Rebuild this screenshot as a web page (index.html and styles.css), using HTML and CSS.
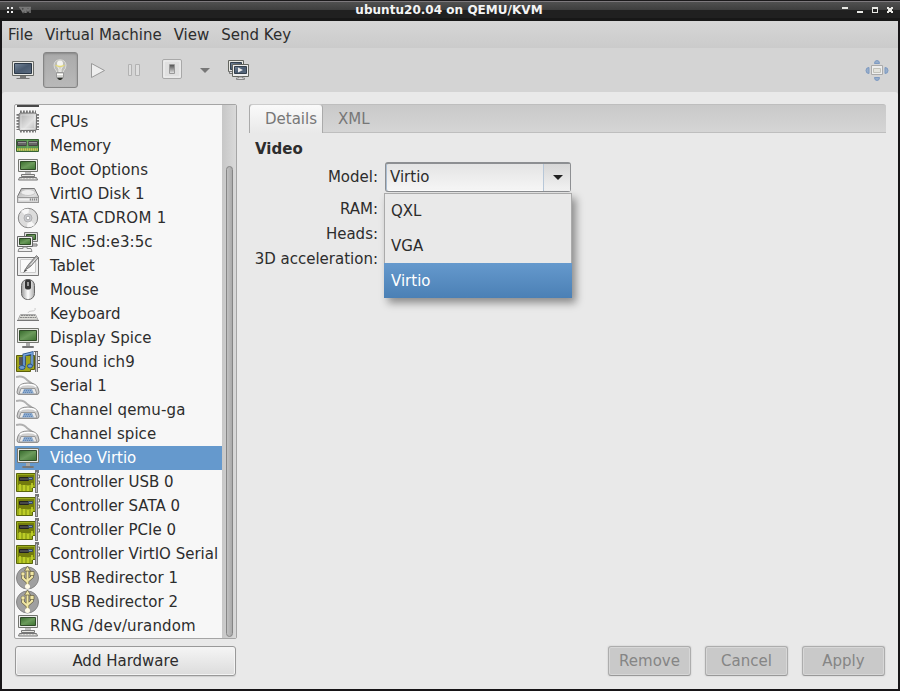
FILE: index.html
```html
<!DOCTYPE html>
<html lang="en">
<head>
<meta charset="utf-8">
<title>ubuntu20.04 on QEMU/KVM</title>
<link rel="stylesheet" href="styles.css">
</head>
<body>
<div class="window">
  <header class="titlebar">
    <svg class="title-left" width="32" height="20" viewBox="0 0 32 20"><path fill="#eee" d="M5 7h2v2H5zM9 7h2v2H9zM5 11h2v2H5zM9 11h2v2H9z"/><path fill="none" stroke="#777" stroke-width="1.500" d="M18 7l3 5 2-5v6M24 13V7l2 4 2-4v6M17 7.500h12"/></svg>
    <h1 class="title">ubuntu20.04 on QEMU/KVM</h1>
    <svg class="title-right" width="60" height="20" viewBox="0 0 60 20"><path fill="#e8e8e4" d="M4 7h6v2H4zM19 11h6v2h-6zM34 7h6v6h-6zM49 7h2v1h2V7h2v2h-1v2h1v2h-2v-1h-2v1h-2v-2h1V9h-1z"/><path fill="#222" d="M35 9h4v3h-4z"/></svg>
  </header>
  <nav class="menubar"><span>File</span><span>Virtual Machine</span><span>View</span><span>Send Key</span></nav>
  <div class="toolbar">
    <svg class="tool console" width="24" height="24"><use href="#screen"/></svg>
    <button class="tool-active"><svg width="24" height="24" viewBox="0 0 24 24"><path d="M7.500 13Q4.800 10.500 5 7Q5.500 2 11 1.800Q16.500 2 17 7Q17.200 10.500 14.500 13V15h-7z" fill="#bdbdb9" stroke="#dcdcd8" stroke-width="1"/><path d="M8 8q3-5 6 0l-2 3v3h-2v-3z" fill="#d2d2ce" stroke="#efefeb"/><circle cx="11" cy="5.500" r="3" fill="#f4f4f0"/><path d="M6.500 7q4.500 3 9 0" fill="none" stroke="#e2d878" stroke-width="1.300"/><path fill="#d8d8d4" stroke="#999" d="M7.500 14.500h7v5h-7z"/><path stroke="#fff" d="M8 16.500h6"/><path d="M8 20h6l-2 2h-2z" fill="#30332d"/></svg></button>
    <svg class="tool play" width="24" height="24" viewBox="0 0 24 24"><path d="M5.500 5.500l13 7-13 7z" fill="#eee" stroke="#999" stroke-linejoin="round"/></svg>
    <svg class="tool pause" width="24" height="24" viewBox="0 0 24 24"><path d="M6.500 6.500h3v11h-3zM13.500 6.500h4v11h-4z" fill="#dedede" stroke="#b2b2b2"/></svg>
    <svg class="tool power" width="24" height="24" viewBox="0 0 24 24"><rect x="2.500" y="2.500" width="19" height="19" rx="1.500" fill="#e0e0e0" stroke="#a8a8a8"/><rect x="4" y="4" width="16" height="16" fill="none" stroke="#f1f1f1"/><path fill="#d8d8d8" stroke="#999" d="M9.500 7.500h5v9h-5z"/><path d="M10 8h4v7h-4z" fill="url(#dark)"/></svg>
    <svg class="tool arrow" width="10" height="6" viewBox="0 0 10 6"><path fill="#777" d="M0 0h10L5 5z"/></svg>
    <svg class="tool snapshots" width="24" height="24" viewBox="0 0 24 24"><path d="M2.500 2.500h15v11h-15z" fill="#e8e8e4" stroke="#63655f"/><path fill="url(#blue)" stroke="#34404c" d="M4.500 4.500h11v7h-11z"/><path fill="#ddd" stroke="#777" d="M3.500 15.500h5v-2h-5z"/><path d="M6.500 6.500h16v12h-16z" fill="#eee" stroke="#63655f"/><path fill="url(#blue)" stroke="#34404c" d="M8.500 8.500h12v7h-12z"/><path d="M12 9.500l5 2.500-5 2.500z" fill="#eee"/><path fill="#ddd" stroke="#888" d="M12.500 19h4v1h2v1.500h-8V20h2z"/></svg>
    <svg class="fullscreen" width="24" height="24" viewBox="0 0 24 24"><g fill="#98aeca" stroke="#7d9ac2"><path d="M9.500 5.500q0-3 2.500-3t2.500 3zM9.500 19.500q0 3 2.500 3t2.500-3zM4 9.500q-3 0-3 3t3 3zM20 9.500q3 0 3 3t-3 3z"/></g><path fill="#eee" stroke="#aaa" d="M6.500 7.500h11v9h-11z"/><path fill="#e2e2dd" stroke="#c2c2ba" d="M8.500 10.500h7v4h-7z"/></svg>
  </div>
  <main class="content">
    <aside class="side">
      <div class="list-frame">
        <ul class="list">
          <li><svg><use href="#overview"/></svg></li>
          <li><svg><use href="#cpu"/></svg>CPUs</li>
          <li><svg><use href="#memory"/></svg>Memory</li>
          <li class="loose"><svg><use href="#computer"/></svg>Boot Options</li>
          <li class="loose"><svg><use href="#disk"/></svg>VirtIO Disk 1</li>
          <li class="looser"><svg><use href="#cd"/></svg>SATA CDROM 1</li>
          <li class="loose"><svg><use href="#nic"/></svg>NIC :5d:e3:5c</li>
          <li><svg><use href="#tablet"/></svg>Tablet</li>
          <li><svg><use href="#mouse"/></svg>Mouse</li>
          <li><svg><use href="#keyboard"/></svg>Keyboard</li>
          <li class="loose"><svg><use href="#display"/></svg>Display Spice</li>
          <li class="loose more"><svg><use href="#sound"/></svg>Sound ich9</li>
          <li><svg><use href="#serial"/></svg>Serial 1</li>
          <li class="loose more"><svg><use href="#serial"/></svg>Channel qemu-ga</li>
          <li class="loose"><svg><use href="#serial"/></svg>Channel spice</li>
          <li class="selected"><svg><use href="#display"/></svg>Video Virtio</li>
          <li><svg><use href="#card"/></svg>Controller USB 0</li>
          <li><svg><use href="#card"/></svg>Controller SATA 0</li>
          <li><svg><use href="#card"/></svg>Controller PCIe 0</li>
          <li><svg><use href="#card"/></svg>Controller VirtIO Serial</li>
          <li class="loose"><svg><use href="#usb"/></svg>USB Redirector 1</li>
          <li class="loose"><svg><use href="#usb"/></svg>USB Redirector 2</li>
          <li class="loose more"><svg><use href="#computer"/></svg>RNG /dev/urandom</li>
        </ul>
        <div class="scrollbar"><div class="thumb"></div></div>
      </div>
      <button class="button add">Add Hardware</button>
    </aside>
    <section class="details">
      <div class="tabs"><div class="tab active">Details</div><div class="tab">XML</div></div>
      <h2 class="heading">Video</h2>
      <div class="form">
        <span class="label model">Model:</span>
        <div class="combo-wrap">
          <div class="combo"><span class="value">Virtio</span><span class="drop"><svg width="10" height="6" viewBox="0 0 10 6"><path fill="#222" d="M0 0h10L5 5z"/></svg></span></div>
          <ul class="popup"><li>QXL</li><li>VGA</li><li class="current">Virtio</li></ul>
        </div>
        <span class="label">RAM:</span>
        <span class="label">Heads:</span>
        <span class="label">3D acceleration:</span>
      </div>
      <div class="actions"><button class="button" disabled>Remove</button><button class="button" disabled>Cancel</button><button class="button" disabled>Apply</button></div>
    </section>
  </main>
</div>
<svg class="defs" width="0" height="0">
  <defs>
    <linearGradient id="green" x2="1" y2="1"><stop stop-color="#376b2c"/><stop offset=".5" stop-color="#6c9b5c"/><stop offset="1" stop-color="#3d7331"/></linearGradient>
    <linearGradient id="blue" x2="1" y2="1"><stop stop-color="#76879b"/><stop offset=".5" stop-color="#4a5b70"/><stop offset="1" stop-color="#5b6b80"/></linearGradient>
    <linearGradient id="dark" x2="0" y2="1"><stop stop-color="#555"/><stop offset="1" stop-color="#ccc"/></linearGradient>
    <linearGradient id="metal" x2="1" y2="1"><stop stop-color="#aaa"/><stop offset=".6" stop-color="#e2e2e2"/><stop offset="1" stop-color="#b5b5b5"/></linearGradient>
    <linearGradient id="grey" x2="1"><stop stop-color="#999"/><stop offset=".5" stop-color="#fff"/><stop offset="1" stop-color="#aaa"/></linearGradient>
  </defs>
  <symbol id="screen" viewBox="0 0 24 24"><path fill="#e9e9e5" stroke="#686a66" d="M1.500 3.500h21v14h-21z"/><path fill="url(#blue)" stroke="#2c3948" d="M3.500 5.500h17v10h-17z"/><path fill="#777" d="M9 18h6v2h3l1 1H5l1-1h3z"/></symbol>
  <symbol id="overview" viewBox="0 0 24 24"><path fill="#494949" d="M1 19h22v2H1z"/></symbol>
  <symbol id="cpu" viewBox="0 0 24 24"><path fill="none" stroke="#777" stroke-width="3" stroke-dasharray="1.800 1.200" d="M4 2h16M4 21h16M2 4v16M21.500 4v16"/><rect x="3" y="3" width="17.500" height="17.500" rx="1.500" fill="url(#metal)" stroke="#707070"/><path fill="none" stroke="#eee" opacity=".5" d="M5 5h13.500v13.500h-13.500z"/></symbol>
  <symbol id="memory" viewBox="0 0 24 24"><path fill="#5b9652" stroke="#376333" d="M.5 5.500h22v12H.5z"/><path fill="#666" stroke="#444" d="M1.500 7.500h9v4h-9zM12.500 7.500h9v4h-9z"/><path stroke="#999" d="M2 8.500h8M13 8.500h8"/><path stroke="#6cad62" stroke-width="1.500" d="M11.500 6v8"/><path stroke="#d3c955" stroke-width="2.500" stroke-dasharray="1.500 .5" d="M1 15.500h21"/></symbol>
  <symbol id="computer" viewBox="0 0 24 24"><path fill="#eee" stroke="#747670" d="M2.500 1.500h19v12h-19z"/><path fill="url(#green)" stroke="#314c29" d="M4.500 3.500h15v8h-15z"/><path fill="#bbb" d="M9 14h6v3H9z"/><path fill="#e6e6e2" stroke="#777" d="M5.500 16.500h13v2h-13zM3.500 19.500h17l1 2.500h-19z"/><path stroke="#aaa" stroke-dasharray="2 1" d="M4 21h16"/></symbol>
  <symbol id="disk" viewBox="0 0 24 24"><path fill="url(#metal)" stroke="#777" stroke-linejoin="round" d="M5.500 6.500h13l4 8v6h-21v-6z"/><ellipse cx="12" cy="10.500" rx="7" ry="3" fill="#eee" stroke="#c5c5c5"/><path fill="#d5d5d5" stroke="#999" d="M1.500 15.500h21v5h-21z"/><path stroke="#f0f0f0" stroke-width="2" d="M3 17.500h10"/><path stroke="#888" stroke-width="2" stroke-dasharray="1 1" d="M14 17.500h7"/></symbol>
  <symbol id="cd" viewBox="0 0 24 24"><circle cx="12" cy="12" r="9.700" fill="#dcdcdc" stroke="#858585"/><path fill="#f7f7f7" d="M12 12L5 5q5-3 8-2zM12 12l7 7q-5 3-8 2z"/><circle cx="12" cy="12" r="4" fill="#c9cbd0" stroke="#aaa" stroke-width=".8"/><circle cx="12" cy="12" r="1.800" fill="#fff" stroke="#888" stroke-width=".6"/></symbol>
  <symbol id="nic" viewBox="0 0 24 24"><path fill="#ddd" stroke="#777" d="M8.500 2.500h13v9h-13zM14 14h7v2h-7z"/><path fill="url(#green)" stroke="#314c29" d="M10.500 4.500h9v5h-9z"/><path fill="#eee" stroke="#666" d="M1.500 6.500h15v10h-15z"/><path fill="url(#green)" stroke="#314c29" d="M3.500 8.500h11v6h-11z"/><path fill="#eee" stroke="#888" d="M7 17h4v1.500h4l1 3H2l1-3h4z"/></symbol>
  <symbol id="tablet" viewBox="0 0 24 24"><path fill="#eee" stroke="#777" d="M1.500 3.500h21v18h-21z"/><path fill="#fafafa" stroke="#ccc" d="M4.500 5.500h15v13h-15z"/><path fill="#aaa" stroke="#666" stroke-width=".8" d="M20.500 1.500l-8 9-4 6 6-4 8-9z"/><path d="M9 16l-2 3 4.500-3z" fill="#444"/><path stroke="#eee" d="M20.500 4l-6 7"/></symbol>
  <symbol id="mouse" viewBox="0 0 24 24"><rect x="5.500" y="1.500" width="13" height="20" rx="6" fill="url(#grey)" stroke="#666"/><rect x="9" y="1.500" width="6" height="10" rx="2" fill="#333"/><path stroke="#999" stroke-width="2" d="M12 4v4"/></symbol>
  <symbol id="keyboard" viewBox="0 0 24 24"><path fill="none" stroke="#ccc" d="M12 11q0-2 4-2t3-3"/><path fill="#deded9" stroke="#aaa" d="M4.500 12.500h15l2.500 5.500h-20z"/><path stroke="#888" stroke-dasharray="2 .5" d="M5 13.500h14M4 15.500h16"/><path stroke="#777" d="M1 18.500h22"/></symbol>
  <symbol id="display" viewBox="0 0 24 24"><path fill="#e9e9e5" stroke="#747670" d="M1.500 2.500h21v14h-21z"/><path fill="url(#green)" stroke="#314c29" d="M3.500 4.500h17v10h-17z"/><path fill="#aaa" d="M10 17h4v3h-4z"/><path fill="#eee" stroke="#777" d="M6.500 20.500h11v1h-11z"/></symbol>
  <symbol id="sound" viewBox="0 0 24 24"><path fill="#a0a51c" stroke="#5b5f09" d="M.5 5.500h18v14h-4v2h-14z"/><path fill="#555" d="M3 7h7v8H3z"/><path stroke="#777" stroke-width="3" d="M20.500 1v21"/><path stroke="#ccc" d="M20.500 2v20"/><path fill="none" stroke="#666" d="M18 1.500h4M22 6.500h2v4h-2M22 13.500h2v4h-2"/><path fill="none" stroke="#28528b" stroke-width="3" d="M8 17V5l8-2v13"/><path fill="none" stroke="#79a8df" stroke-width="1.500" d="M8 17V5l8-2v13"/><ellipse cx="6" cy="17.500" rx="3" ry="2" fill="#6c9ad1" stroke="#28528b"/><ellipse cx="14" cy="16" rx="2.500" ry="2" fill="#6c9ad1" stroke="#28528b"/></symbol>
  <symbol id="serial" viewBox="0 0 24 24"><path fill="none" stroke="#b0b0b0" stroke-width="2" d="M0 3q7-2 11 3l7 5"/><path fill="#cfcfcf" stroke="#8a8a8a" d="M2 14q2-5 10-5t10 5l1 4q0 2.500-2 2.500H3q-2 0-2-2.500z"/><path fill="none" stroke="#fff" stroke-width="1.500" d="M4 13q1-2.500 8-2.500t8 2.500"/><path fill="#e9e9e9" stroke="#999" d="M5 14.500h14l2 5.500H3z"/><path fill="#8ba9cc" d="M8 15h8l2 4.500H6z"/><path stroke="#6187b8" stroke-dasharray="1 1" d="M8 16.500h8M7 18.500h10"/></symbol>
  <symbol id="card" viewBox="0 0 24 24"><path fill="#9bac1b" stroke="#59650b" d="M.5 3.500h19v14h-3v4H.5z"/><path fill="#737c0d" d="M2 5h16v10H2z"/><path fill="#484848" stroke="#222" d="M3.500 7.500h9v3h-9z"/><path fill="#8295ac" stroke="#394d62" d="M12.500 7.500h4v2h-4z"/><path stroke="#c9d82b" stroke-width="1.500" d="M4 21v-7M8 21v-6M12 21v-5M16 18v-5"/><path fill="none" stroke="#777" stroke-width="3" d="M23 1.500h-2.500V23"/><path stroke="#bbb" d="M20.500 2v20"/><path fill="none" stroke="#777" d="M22 5h1.500v3H22M22 11h1.500v3H22"/></symbol>
  <symbol id="usb" viewBox="0 0 24 24"><circle cx="11.500" cy="12" r="11" fill="#a0a0a0" stroke="#858585"/><path fill="none" stroke="#655f41" stroke-width="3.200" d="M11.500 2v19M7 8v4l4.500 4M16 8v3l-4.500 4"/><path fill="none" stroke="#f1e7a4" stroke-width="2" d="M11.500 3v18M7 8v4l4.500 4M16 8v3l-4.500 4"/><path fill="#f1e7a4" stroke="#655f41" stroke-width=".7" d="M11.500 0l3 5h-6zM14 5.500h4v4h-4z"/><circle cx="7" cy="8" r="2" fill="#f1e7a4" stroke="#655f41" stroke-width=".5"/><circle cx="11.500" cy="20.500" r="2.500" fill="#fffbe8"/></symbol>
</svg>
</body>
</html>
```
FILE: styles.css
```css
* { box-sizing: border-box; }
body { margin: 0; overflow: hidden; font: 15px/24px "DejaVu Sans", sans-serif; color: #2d2d2d; }
ul { margin: 0; padding: 0; list-style: none; }
svg { display: block; flex: none; }
button { font: inherit; color: inherit; margin: 0; padding: 0; }
.window { display: flex; flex-direction: column; width: 900px; height: 691px; background: #d4d4d4; border: 2px solid #171517; border-width: 0 2px 2px; }
.titlebar { display: flex; flex: none; justify-content: space-between; height: 21px; margin: 0 -2px; background: linear-gradient(#1b191b 0 1px, #7d797d 1px 2px, #505050 2px, #3e3e3e 10px, #202020 10px 18px, #171717 18px); }
.title-left { margin: 0 26px 0 2px; }
.title-right { margin-right: 2px; }
.title { margin: 0; color: #f4f4f4; font-size: 12px; line-height: 20px; font-weight: bold; letter-spacing: .03px; }
.menubar { display: flex; flex: none; gap: 12px; height: 27px; padding: 2px 0 0 6px; background: linear-gradient(#d6d6d6, #cbcbcb); }
.toolbar { display: flex; flex: none; align-items: center; height: 44px; padding: 0 9px; }
.tool-active { display: grid; place-items: center; width: 35px; height: 36px; margin: 0 8px; border: 1px solid #858585; border-radius: 3px; background: linear-gradient(#aaa, #b9b9b9); box-shadow: inset 0 1px 2px #888; }
.pause { margin-left: 12px; }
.power { margin-left: 14px; margin-top: -2px; }
.arrow { margin: 1px 16px 0; }
.fullscreen { margin-left: auto; }
.content { display: flex; flex: 1; gap: 12px; padding: 12px 12px 13px; border-radius: 3px 3px 0 0; background: #e9e9e9; }
.side { display: flex; flex-direction: column; width: 223px; gap: 7px; }
.list-frame { display: flex; height: 535px; border: 1px solid #a5a5a5; border-radius: 2px; background: #f7f7f7; overflow: hidden; }
.list { width: 207px; margin-top: -19px; overflow: hidden; }
.list li { display: flex; gap: 10px; height: 24px; line-height: 25px; white-space: nowrap; }
.list .loose { letter-spacing: .07px; }
.list .more { letter-spacing: .15px; }
.list .looser { letter-spacing: .25px; }
.list svg { width: 24px; height: 24px; margin-left: 1px; }
.list .selected { background: #6599cd; color: #fff; }
.scrollbar { width: 14px; padding: 61px 3px 1px 4px; background: linear-gradient(90deg, #c7c7c7, #d9d9d9); }
.thumb { height: 471px; border: 1px solid #858585; border-radius: 4px; background: linear-gradient(90deg, #c1c1c1, #aaa); }
.button { width: 83px; height: 30px; border: 1px solid #999; border-radius: 3px; background: linear-gradient(#f5f5f5, #dcdcdc); box-shadow: inset 0 0 0 1px #f4f4f4, 0 1px 1px #d0d0d0; line-height: 26px; }
.add { width: 221px; margin-left: 1px; }
.button:disabled { color: #858585; border-color: #adadad #adadad #999; background: #c9c9c9; box-shadow: inset 0 0 0 1px #d7d7d7, 0 0 1px 1px #dedede; }
.details { display: flex; flex-direction: column; width: 637px; }
.tabs { display: flex; flex: none; height: 29px; border: 1px solid #bebebe; border-width: 1px 0; border-radius: 3px 3px 0 0; background: linear-gradient(#c9c9c9, #d5d5d5); color: #777; }
.tab { padding: 2px 15px 0; }
.active { width: 74px; height: 29px; margin-top: -1px; padding: 2px 0 0 15px; border: 1px solid #aaa; border-top-color: #ccc; border-bottom: 0; border-radius: 4px 4px 0 0; background: linear-gradient(#fafafa, #e9e9e9); }
.heading { margin: 4px 0 1px 6px; font-size: 15px; line-height: 24px; }
.form { display: grid; grid-template-columns: 129px 186px; grid-template-rows: 34px 25px 25px 25px; column-gap: 7px; }
.label { grid-column: 1; text-align: right; line-height: 27px; }
.model { line-height: 31px; }
.combo-wrap { position: relative; grid-column: 2; grid-row: 1; }
.combo { display: flex; height: 30px; border: 1px solid #8d8f92; border-top-width: 2px; border-radius: 3px; background: linear-gradient(#e4e4e4, #f6f6f6); box-shadow: inset 1px 0 #a9bdd2, inset 0 -1px #fff; }
.value { flex: 1; padding-left: 4px; line-height: 27px; }
.drop { display: grid; place-items: center; width: 27px; padding-left: 2px; border-left: 1px solid #b7c7d8; background: linear-gradient(#d7d7d7, #f2f2f2); }
.popup { position: absolute; z-index: 1; top: 31px; left: -1px; width: 188px; height: 105px; border: 1px solid #aaa; border-bottom: 0; background: #e9e9e9; box-shadow: 4px 5px 8px rgba(0,0,0,.4); }
.popup li { height: 35px; padding-left: 6px; line-height: 37px; }
.popup li:first-child { height: 34px; line-height: 35px; }
.popup .current { margin: 0 -1px; padding-left: 7px; background: linear-gradient(#6599cd, #4b80b5); color: #fff; }
.actions { display: flex; gap: 14px; justify-content: flex-end; margin: auto 1px 0 0; }
```
